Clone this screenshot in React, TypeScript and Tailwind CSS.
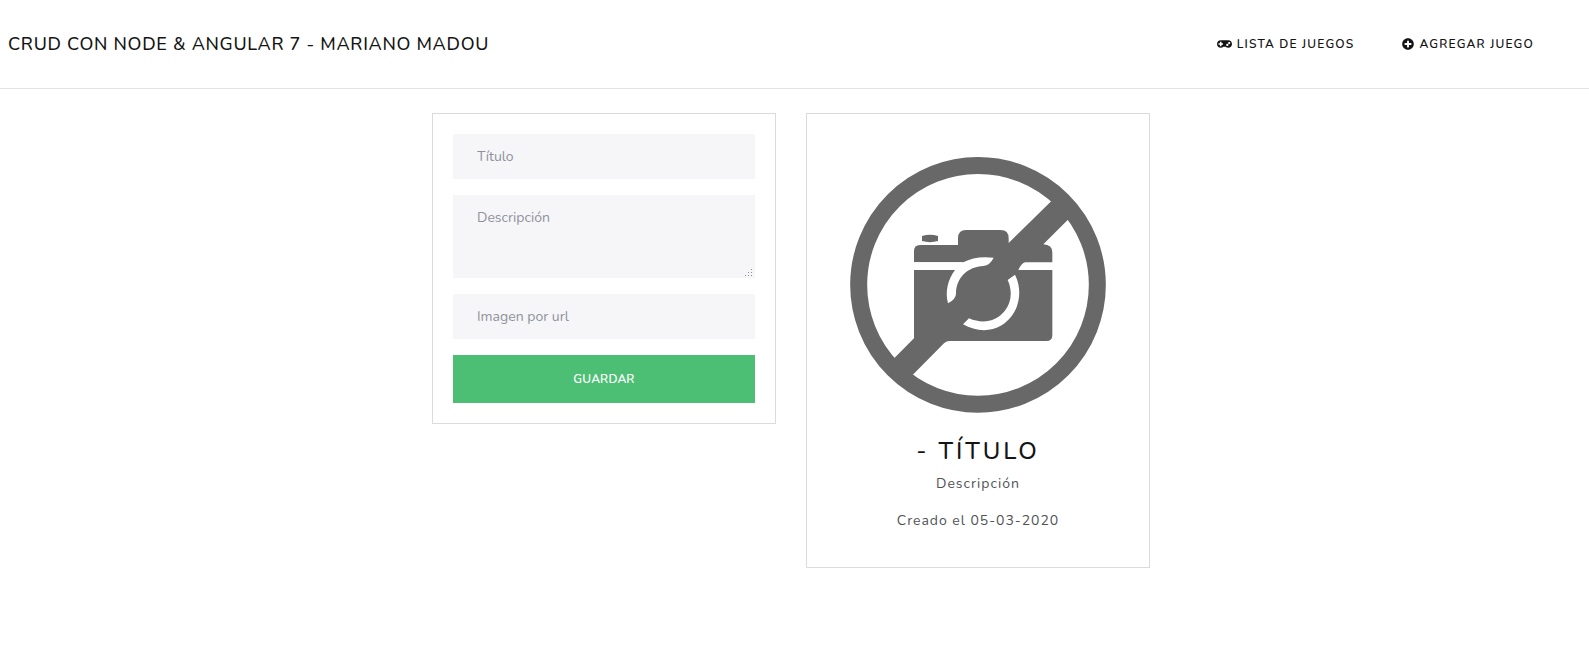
import React from "react";
import { FaPlusCircle } from "react-icons/fa";

function Gamepad() {
  return (
    <svg viewBox="0 0 640 512" className="h-[12px] w-[15px]" fill="currentColor" aria-hidden="true">
      <path
        fillRule="evenodd"
        d="M480 96H160C71.6 96 0 167.6 0 256s71.6 160 160 160c44.800 0 85.200-18.400 114.200-48h91.500c29 29.600 69.500 48 114.200 48 88.400 0 160-71.600 160-160S568.400 96 480 96zM256 276c0 6.600-5.400 12-12 12h-52v52c0 6.600-5.400 12-12 12h-40c-6.600 0-12-5.400-12-12v-52H76c-6.600 0-12-5.400-12-12v-40c0-6.600 5.400-12 12-12h52v-52c0-6.600 5.400-12 12-12h40c6.600 0 12 5.400 12 12v52h52c6.600 0 12 5.400 12 12v40zm184 68c-26.500 0-48-21.500-48-48s21.500-48 48-48 48 21.500 48 48-21.500 48-48 48zm80-80c-26.500 0-48-21.500-48-48s21.500-48 48-48 48 21.500 48 48-21.500 48-48 48z"
      />
    </svg>
  );
}

function NoImage() {
  return (
    <svg viewBox="0 0 828 840" className="mx-auto block h-[280px] w-[276px]" role="img" aria-label="Sin imagen">
      <g fill="#686868">
        <circle cx="414" cy="419.5" r="358" fill="none" stroke="#686868" strokeWidth="51" />
        <path d="M246 273Q270 265 294 273V288Q270 295 246 288Z" />
        <path d="M222 352V318Q222 300 240 300H354V280Q354 255 378 255H482Q506 255 506 280V294L632 170L650 160L694 210L683 225L610 298Q637 300 637 322V352H556Q546 352 535 375H637V570Q637 588 619 588H328Q320 588 312 595L220 688L200 696L152 652L164 638L222 580V375H345Q357 358 370 352Z" />
      </g>
      <g fill="#fff">
        <path d="M222 352H370Q405 332 461 338Q450 361 430 363C384 365 348 398 348 446Q348 462 324 475C315 440 323 405 345 375H222Z" />
        <path d="M503 405L525 389C552 444 535 510 485 541C447 563 405 558 369 538L387 520C429 539 470 528 494 498C516 470 517 436 503 405Z" />
      </g>
    </svg>
  );
}

function ResizeHandle() {
  return (
    <svg viewBox="0 0 9 9" className="pointer-events-none absolute right-[2px] bottom-[1px] size-[9px]" shapeRendering="crispEdges" fill="#8b8d92">
      <path d="M7 1h1v1h-1zM4 4h1v1h-1zM7 4h1v1h-1zM1 7h1v1h-1zM4 7h1v1h-1zM7 7h1v1h-1z" />
    </svg>
  );
}

export default function App() {
  const field =
    "block w-full bg-[#f6f6f9] px-6 text-[14px] text-[#495057] placeholder:text-[#8f9299] outline-none";
  return (
    <div className="min-h-screen bg-white font-[Nunito,'Nunito_Sans',Lato,sans-serif] text-[#141414]">
      <header className="flex h-[89px] items-center justify-between border-b border-[#e2e3e4] pr-[55px] pl-2">
        <a href="#" className="text-[18px] leading-6 font-medium tracking-[0.7px] uppercase">
          Crud con Node &amp; Angular 7 - Mariano Madou
        </a>
        <nav className="flex items-center gap-12 text-[12px] font-semibold tracking-[1.16px] uppercase">
          <a href="#" className="flex items-center gap-[5px]">
            <Gamepad />
            <span>Lista de juegos</span>
          </a>
          <a href="#" className="flex items-center gap-[5px]">
            <FaPlusCircle className="size-3" />
            <span>Agregar juego</span>
          </a>
        </nav>
      </header>
      <main className="flex items-start gap-[30px] pt-6 pl-[432px]">
        <form className="flex w-[344px] flex-col gap-4 border border-[#dadbdc] p-5">
          <input className={`${field} h-[45px]`} placeholder="Título" />
          <div className="relative">
            <textarea className={`${field} h-[83px] resize-none pt-[12px] leading-[21px]`} placeholder="Descripción" />
            <ResizeHandle />
          </div>
          <input className={`${field} h-[45px]`} placeholder="Imagen por url" />
          <button type="button" className="h-12 bg-[#4dbf74] text-[12px] font-semibold tracking-[0.15px] text-white uppercase">
            Guardar
          </button>
        </form>
        <article className="h-[455px] w-[344px] border border-[#dadbdc] pt-[31px] text-center">
          <NoImage />
          <h1 className="pt-[8px] text-[24px] leading-[36px] font-medium tracking-[2.9px] uppercase">- Título</h1>
          <p className="pt-[3px] text-[14px] leading-[24px] tracking-[1px] text-[#505356]">Descripción</p>
          <p className="pt-[13px] text-[14px] leading-[24px] tracking-[0.97px] text-[#505356]">Creado el 05-03-2020</p>
        </article>
      </main>
    </div>
  );
}
